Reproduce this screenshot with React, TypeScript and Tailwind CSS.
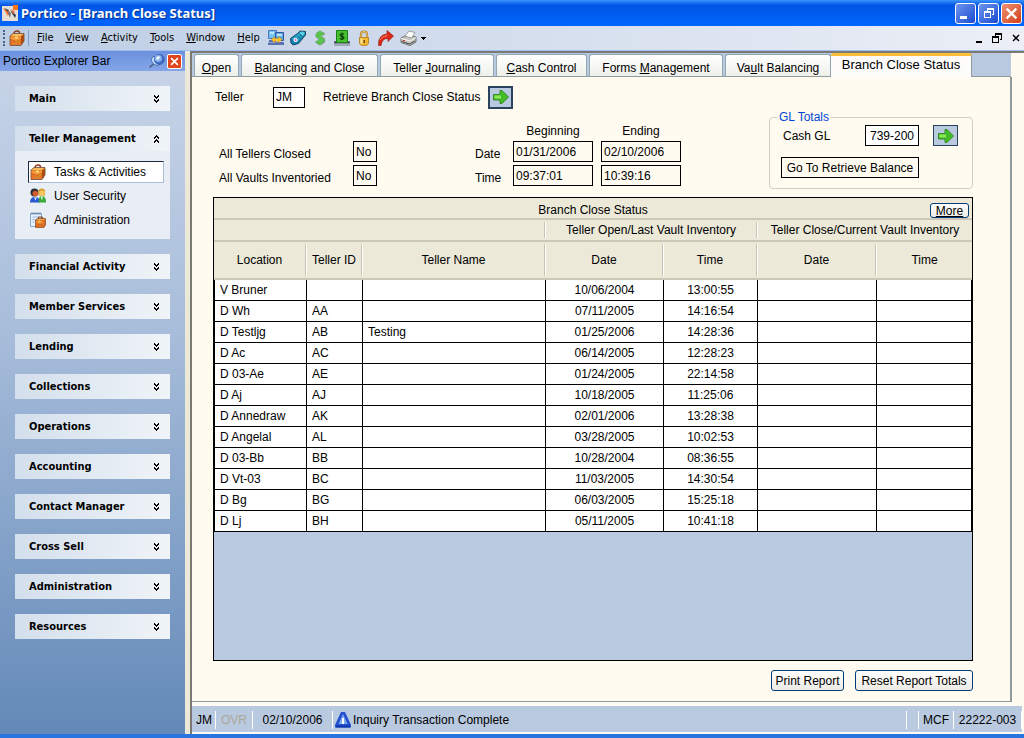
import React from 'react';

const tahoma = "font-['DejaVu_Sans_Condensed','Noto_Sans',sans-serif]";

const groups = [
  'Financial Activity',
  'Member Services',
  'Lending',
  'Collections',
  'Operations',
  'Accounting',
  'Contact Manager',
  'Cross Sell',
  'Administration',
  'Resources',
];

const rows = [
  ['V Bruner', '', '', '10/06/2004', '13:00:55'],
  ['D Wh', 'AA', '', '07/11/2005', '14:16:54'],
  ['D Testljg', 'AB', 'Testing', '01/25/2006', '14:28:36'],
  ['D Ac', 'AC', '', '06/14/2005', '12:28:23'],
  ['D 03-Ae', 'AE', '', '01/24/2005', '22:14:58'],
  ['D Aj', 'AJ', '', '10/18/2005', '11:25:06'],
  ['D Annedraw', 'AK', '', '02/01/2006', '13:28:38'],
  ['D Angelal', 'AL', '', '03/28/2005', '10:02:53'],
  ['D 03-Bb', 'BB', '', '10/28/2004', '08:36:55'],
  ['D Vt-03', 'BC', '', '11/03/2005', '14:30:54'],
  ['D Bg', 'BG', '', '06/03/2005', '15:25:18'],
  ['D Lj', 'BH', '', '05/11/2005', '10:41:18'],
];

/* Icons */

const Briefcase = ({ className = 'w-4 h-4' }) => (
  <svg viewBox="0 0 16 16" className={className}>
    <path d="M5 4.500V3Q5.500 1 8 1t2.500 2v1" fill="none" stroke="#8a3414" strokeWidth="1.400" />
    <path d="M1 6 4 3.500h11V11l-3 4.500H1z" fill="#c45f17" stroke="#7d5a48" strokeWidth=".9" />
    <path d="M1.500 6 4.300 4h10.200L12 6.300z" fill="#f8bc5c" />
    <path d="M1.500 6.500H12V9l-5 2-5.500-2z" fill="#f49a38" />
    <path d="M1.500 10 7 11.500 12 9.500V15H1.500z" fill="#e8742c" />
    <path d="m5 14.500 6-4" stroke="#c8981c" strokeWidth="1.200" />
    <path d="M12.300 6.500 14.700 4.300V11l-2.400 3.800z" fill="#a8480f" />
    <path d="M6 6.500h3v2H6z" fill="#fcd878" />
  </svg>
);

const AppLogo = () => (
  <svg viewBox="0 0 16 16" className="w-4 h-4">
    <path d="M0 1h16v15H0z" fill="#e6ded6" />
    <path d="M11 0h5v5h-5z" fill="#ff7414" />
    <path d="m1 3 7 4-2 4z" fill="#f0702c" />
    <path d="m2 3 5 2-1 2z" fill="#3c4454" />
    <path d="m5.500 6 2.500 7 1-5z" fill="#68707c" />
    <path d="m8 5 6 5-1 3z" fill="#303848" />
    <path d="m9 4 4 3-2 2z" fill="#e8642c" />
  </svg>
);

const Computers = () => (
  <svg viewBox="0 0 16 16" className="w-4 h-4">
    <path d="M.5.500h8v8h-8z" fill="#70c4f4" stroke="#4c72c0" />
    <path d="M7.500 2.500h8v8h-8z" fill="#58a4e6" stroke="#3454a0" />
    <path d="M2 2h4v2H2zM9 4h5v2H9z" fill="#b6e8fc" />
    <path d="M1 10h7v2H1zM0 12.500h9V15H0zM8 12h8v3H8z" fill="#5870b4" />
    <path d="m3.500 9.500 3-3v2h4v-2l3.500 3-3.500 3.500v-2h-4v2z" fill="#ffc828" stroke="#c88410" strokeWidth=".5" />
  </svg>
);

const Pager = () => (
  <svg viewBox="0 0 16 16" className="w-4 h-4">
    <path d="m.500 8.500 7-5L10 1l5.500.5V5l-7 8.500L3 15l-2-2z" fill="#1280a8" stroke="#103c60" strokeWidth=".9" />
    <path d="m1.500 8.500 8-5.500L13 6l-6.500 6.500z" fill="#28a4c8" />
    <path d="m9.500 3 1-1.500 4 .5v2.500L12.500 6z" fill="#58cce0" />
    <circle cx="5.500" cy="10" r="2.100" fill="#fff" />
    <circle cx="5.500" cy="10" r="1.100" fill="#e060c0" />
    <path d="m8 6.500 2 2M10 4.500l2 2" stroke="#083c60" />
  </svg>
);

const Dollar = () => (
  <svg viewBox="0 0 16 16" className="w-4 h-4">
    <path d="M12 4.800C11 3.200 5.200 2.400 5 5.300c-.2 3 6.800 2 6.600 5.200-.2 3-5.800 2.600-7.400.7M8 .8v14.400" fill="none" stroke="#7c8c7c" strokeWidth="3.200" />
    <path d="M11.600 4.600C10.600 3.200 5 2.400 4.800 5.100c-.2 2.800 6.600 2 6.400 5.200-.2 2.800-5.600 2.600-7 .7M8 1v14" fill="none" stroke="#54cc44" strokeWidth="2" />
  </svg>
);

const CashDrawer = () => (
  <svg viewBox="0 0 16 16" className="w-4 h-4">
    <path d="M0 11h16v4.500H0z" fill="#6e7484" />
    <path d="M1 12h14v1H1z" fill="#242838" />
    <path d="M2.500.500h11v12h-11z" fill="#48c030" stroke="#1c8018" />
    <path d="M10 4.300C9 3.400 6 3.400 6 5c0 1.800 4 1 4 2.800 0 1.700-3 1.600-4.200.6M8 2.500v7.500" fill="none" stroke="#0a3808" strokeWidth="1.100" />
    <path d="M0 13.500h16V15H0z" fill="#a4a8b4" />
  </svg>
);

const Padlock = () => (
  <svg viewBox="0 0 16 16" className="w-4 h-4">
    <path d="M5 8V4.500Q5 1.500 8 1.500t3 3V8" fill="none" stroke="#a87820" strokeWidth="2.200" />
    <path d="M5 8V4.500Q5 1.500 8 1.500t3 3V8" fill="none" stroke="#f4d078" strokeWidth="1" />
    <path d="M3.500 7.500h9V13Q12.500 15.500 8 15.500T3.500 13z" fill="#f4b830" stroke="#b07818" strokeWidth=".8" />
    <path d="M4.500 8.500h2V14l-2-1z" fill="#fce49c" />
    <path d="M7.500 10H9v3H7.500z" fill="#704808" />
  </svg>
);

const RedArrow = () => (
  <svg viewBox="0 0 16 16" className="w-4 h-4">
    <path d="M.500 15.500Q0 4.500 9 4V.500l6.500 5.500-5.500 5.500V8.500Q4 8 3 15.500z" fill="#dc2814" stroke="#901408" strokeWidth=".6" />
    <path d="M2 10Q4 6 9.500 5.500" fill="none" stroke="#f88468" />
  </svg>
);

const PrinterIcon = () => (
  <svg viewBox="0 0 18 16" className="w-[18px] h-4">
    <path d="m1 8 6-3 9 2v5l-6 3.500-9-3z" fill="#c4c4c0" stroke="#585858" strokeWidth=".8" />
    <path d="m5 6 4-5 6 1.500L11.500 8z" fill="#fff" stroke="#808080" strokeWidth=".7" />
    <path d="m1 8.500 9 2.500 6-3.500" fill="none" stroke="#f8f8f4" />
    <path d="m2 11.500 7.500 2.500L15 11" fill="none" stroke="#484848" />
    <path d="M3 10h2v1H3z" fill="#d83020" />
  </svg>
);

const Users = () => (
  <svg viewBox="0 0 16 16" className="w-4 h-4">
    <circle cx="4.500" cy="4.500" r="4" fill="#28303c" />
    <circle cx="5.300" cy="5.500" r="2.800" fill="#d45c28" />
    <path d="M0 14.500q0-5.500 5-5.500t5 5.500z" fill="#2858d0" />
    <path d="m4 9.500 1.500 3 1.500-3z" fill="#dce8ff" />
    <path d="M8.500 2Q11.500-1 15 2v5.500H8.500z" fill="#d89420" />
    <circle cx="12" cy="5" r="2.800" fill="#f8c860" />
    <path d="M9 14.500q-1-6.500 3-6.500t4 6.500z" fill="#38a838" />
    <path d="m10.500 8.500 1.500 4 1-4z" fill="#e4f8dc" />
  </svg>
);

const NotebookCase = () => (
  <svg viewBox="0 0 16 16" className="w-4 h-4">
    <path d="M.500 1.500h11v13H.500z" fill="#e4f0fc" stroke="#88a8cc" />
    <path d="M2 .500v2M4 .500v2M6 .500v2M8 .500v2M10 .500v2" stroke="#506c94" />
    <path d="M2.500 5h6M2.500 7.500h3M2.500 10h2" stroke="#98b8e0" />
    <path d="M8.500 6.500V5h4v1.500" fill="none" stroke="#7a3c14" />
    <path d="m5.500 8 2-1.500h8V13L14 15.500H5.500z" fill="#d86c20" stroke="#854a24" strokeWidth=".7" />
    <path d="M6 8h8l1-1H7.500z" fill="#f4a850" />
    <path d="M6 9h7.500v2L10 12l-4-1z" fill="#ec8c38" />
    <path d="M8.500 8.500h2v2h-2z" fill="#f8d060" />
  </svg>
);

const GreenArrow = () => (
  <svg viewBox="0 0 16 14" className="w-4 h-[14px]">
    <path d="M.500 4.500H7V.500h2L15.500 7 9 13.500H7V10H.500z" fill="#44bc28" stroke="#308420" strokeWidth=".9" />
    <path d="M1.500 5.500H8v3H1.500z" fill="#8ce858" />
  </svg>
);

const Chevrons = ({ up = false }) => (
  <svg viewBox="0 0 7 8" className={up ? 'w-[7px] h-2 rotate-180' : 'w-[7px] h-2'} shapeRendering="crispEdges">
    <path d="M1 0h1v1h1v1h1V1h1V0h1v2H5v1H4v1H3V3H2V2H1z" />
    <path d="M1 4h1v1h1v1h1V5h1V4h1v2H5v1H4v1H3V7H2V6H1z" />
  </svg>
);

const Pin = () => (
  <svg viewBox="0 0 16 14" className="w-4 h-[14px]">
    <path d="m.500 13.500 4-3.500" stroke="#455878" strokeWidth="1.300" />
    <path d="M3 3.500q2-2 4-.5l4 3q2 3-1 5-3 1.500-6-1.500T3 3.500z" fill="#c4dcfc" stroke="#446cac" />
    <ellipse cx="10.300" cy="5.500" rx="5" ry="5" fill="#3c6cc8" stroke="#2c509c" strokeWidth=".6" />
    <ellipse cx="9.300" cy="4.500" rx="3.600" ry="3.400" fill="#8cb4f0" />
    <path d="m7 5 2-3 2 1-2 3z" fill="#fff" />
  </svg>
);

const CloseX = ({ className = '' }) => (
  <svg viewBox="0 0 12 12" className={className}>
    <path d="m1.500 1.500 9 9m0-9-9 9" stroke="currentColor" strokeWidth="2.200" />
  </svg>
);

const RestoreIcon = ({ className = '' }) => (
  <svg viewBox="0 0 10 10" className={className} shapeRendering="crispEdges">
    <path d="M3 0h7v7H8V6h1V2H4v1H3z" fill="currentColor" />
    <path d="M0 3h7v7H0zm1 2v4h5V5z" fill="currentColor" fillRule="evenodd" />
  </svg>
);

const InfoTriangle = () => (
  <svg viewBox="0 0 16 16" className="w-4 h-4">
    <path d="M6 0h4l6 13v2.500H0V13z" fill="#2450d0" />
    <path d="m8 2 4.500 10h-9z" fill="#80a8ec" />
    <path d="M7 6h2v6H7z" fill="#fff" />
    <path d="M1 13.500h14v2H1z" fill="#1034b0" />
  </svg>
);

/* Small parts */

const MenuItem = ({ label }: { label: string }) => (
  <button className="first-letter:underline">{label}</button>
);

const Field = ({ id, label, value, className = '' }: { id: string; label: string; value: string; className?: string }) => (
  <input id={id} aria-label={label} defaultValue={value} className={`h-[21px] border border-black px-0.5 outline-none ${className}`} />
);

const GroupHeader = ({ label, open = false }: { label: string; open?: boolean }) => (
  <button className="flex h-[25px] w-full items-center justify-between bg-linear-to-r from-[#d3dfec] to-[#f0f4f8] pl-3.5 pr-2.5 font-bold">
    {label}
    <Chevrons up={open} />
  </button>
);

const HeaderCell = ({ label, last = false }: { label: string; last?: boolean }) => (
  <div className="flex h-full items-stretch py-0.5">
    <span className="flex flex-1 items-center justify-center whitespace-nowrap">{label}</span>
    {!last && <span className="w-0.5 border-r border-white bg-[#c7c4b4]" />}
  </div>
);

const XpButton = ({ children, className = '' }: { children: React.ReactNode; className?: string }) => (
  <button className={`rounded-[3px] border border-[#003c74] bg-linear-to-b from-white to-[#ecebe6] whitespace-nowrap ${className}`}>
    {children}
  </button>
);

const tabBase = 'h-[22px] rounded-t-[3px] border border-b-0 border-[#91a7b4] bg-linear-to-b from-white to-[#efefea] pt-1 whitespace-nowrap';
const headBorder = 'border-b-2 border-[#cbc8b8] p-0 font-normal';

export default function App() {
  return (
    <div className="flex min-h-screen flex-col bg-[#fffbf0] font-['Liberation_Sans',Arial,sans-serif] text-[12px] leading-4 text-black">
      {/* Title bar */}
      <header className="flex h-[26px] items-center bg-linear-to-b from-[#3c94ff] via-[#0055e5] via-20% to-[#0066ff] px-0.5">
        <AppLogo />
        <h1 className="ml-[3px] flex-1 font-['Noto_Sans',sans-serif] text-[13px] font-bold text-white [text-shadow:1px_1px_1px_#0b2f8c]">
          Portico - [Branch Close Status]
        </h1>
        <div className="flex gap-0.5 text-white">
          <button aria-label="Minimize" className="flex h-[21px] w-[21px] items-end rounded-[3px] border border-white bg-linear-to-br from-[#6f95f0] to-[#1b48cf] p-1">
            <span className="h-[3px] w-[7px] bg-white" />
          </button>
          <button aria-label="Restore" className="flex h-[21px] w-[21px] items-center justify-center rounded-[3px] border border-white bg-linear-to-br from-[#6f95f0] to-[#1b48cf]">
            <RestoreIcon className="h-2.5 w-2.5" />
          </button>
          <button aria-label="Close" className="flex h-[21px] w-[21px] items-center justify-center rounded-[3px] border border-white bg-linear-to-br from-[#f09070] to-[#d03c10]">
            <CloseX className="h-[13px] w-[13px]" />
          </button>
        </div>
      </header>

      {/* Menu bar */}
      <nav className={`flex h-[25px] items-center border-b border-[#9ebef5] bg-linear-to-r from-[#bccde4] to-[#eceff6] text-[11px] ${tahoma}`}>
        <span className="ml-[3px] h-4 border-l-2 border-dotted border-[#45618c]" />
        <span className="ml-1 flex h-4 w-5 border-r border-[#7c9cd0]">
          <Briefcase />
        </span>
        <div className="ml-2 flex gap-3">
          <MenuItem label="File" />
          <MenuItem label="View" />
          <MenuItem label="Activity" />
          <MenuItem label="Tools" />
          <MenuItem label="Window" />
          <MenuItem label="Help" />
        </div>
        <div className="ml-2 flex flex-1 items-center gap-1.5">
          <button aria-label="Connect"><Computers /></button>
          <button aria-label="Pager"><Pager /></button>
          <button aria-label="Cash"><Dollar /></button>
          <button aria-label="Cash drawer"><CashDrawer /></button>
          <button aria-label="Lock"><Padlock /></button>
          <button aria-label="Forward"><RedArrow /></button>
          <button aria-label="Print" className="flex items-center gap-[3px]">
            <PrinterIcon />
            <svg viewBox="0 0 5 3" className="h-[3px] w-[5px]" shapeRendering="crispEdges"><path d="M0 0h5L2.500 3z" /></svg>
          </button>
        </div>
        <div className="flex items-center gap-2.5 pr-1">
          <button aria-label="Minimize document" className="mt-2 h-0.5 w-1.5 bg-black" />
          <button aria-label="Restore document"><RestoreIcon className="h-2.5 w-2.5" /></button>
          <button aria-label="Close document"><CloseX className="h-2 w-2" /></button>
        </div>
      </nav>

      <div className="flex flex-1">
        {/* Explorer bar */}
        <aside className="flex w-[185px] shrink-0 flex-col bg-linear-to-b from-[#c9d5e8] via-[#a9bedb] via-40% to-[#6389b8]">
          <div className="flex h-5 items-center bg-linear-to-b from-[#6b90de] to-[#85a5e8] pl-[3px] pr-[3px]">
            <span className="flex-1">Portico Explorer Bar</span>
            <button aria-label="Pin"><Pin /></button>
            <button aria-label="Close explorer bar" className="ml-0.5 flex h-[15px] w-[15px] items-center justify-center rounded-[2px] border border-white bg-[#e0451c] text-white">
              <CloseX className="h-[9px] w-[9px]" />
            </button>
          </div>
          <div className={`flex flex-col gap-[15px] px-[15px] pt-[15px] text-[11px] ${tahoma}`}>
            <GroupHeader label="Main" />
            <section className="bg-[#e9eef4]">
              <GroupHeader label="Teller Management" open />
              <ul className="flex flex-col gap-0.5 px-[13px] pb-2 pt-2.5 font-['Liberation_Sans',Arial,sans-serif] text-[12px]">
                <li>
                  <a href="#tasks" className="flex h-[22px] w-[136px] items-center gap-2 border border-[#a9bcd6] border-l-[#1c2a3c] border-t-[#1c2a3c] bg-white pl-px">
                    <Briefcase /> Tasks &amp; Activities
                  </a>
                </li>
                <li>
                  <a href="#security" className="flex h-[22px] items-center gap-2 pl-0.5">
                    <Users /> User Security
                  </a>
                </li>
                <li>
                  <a href="#admin" className="flex h-[22px] items-center gap-2 pl-0.5">
                    <NotebookCase /> Administration
                  </a>
                </li>
              </ul>
            </section>
            {groups.map((g) => (
              <GroupHeader key={g} label={g} />
            ))}
          </div>
        </aside>

        <div className="w-[5px] shrink-0 bg-[#ece9d8]" />

        <main className="flex min-w-0 flex-1 flex-col border-l-2 border-t-2 border-[#7b7a72]">
          {/* Tabs */}
          <div role="tablist" className="mr-[13px] flex h-6 items-end gap-0.5 border-b border-[#919b9c] bg-[#b9c9e0] pl-0.5">
            <button role="tab" className={`w-[45px] ${tabBase}`}><u>O</u>pen</button>
            <button role="tab" className={`w-[137px] ${tabBase}`}><u>B</u>alancing and Close</button>
            <button role="tab" className={`w-[114px] ${tabBase}`}>Teller <u>J</u>ournaling</button>
            <button role="tab" className={`w-[91px] ${tabBase}`}><u>C</u>ash Control</button>
            <button role="tab" className={`w-[134px] ${tabBase}`}>Forms <u>M</u>anagement</button>
            <div className="flex items-end">
              <button role="tab" className={`w-[106px] ${tabBase}`}>Va<u>u</u>lt Balancing</button>
              <button role="tab" aria-selected="true" className="-mb-px h-6 w-[141px] whitespace-nowrap rounded-t-[3px] border-r border-t-[3px] border-r-[#919b9c] border-t-[#fcbe38] bg-[#fdfcfa] pb-1 text-[13px]">
                Branch Close Status
              </button>
            </div>
          </div>

          <div className="mr-3 flex flex-1 flex-col border-b border-r-2 border-[#919b9c] pb-2.5 pl-[21px] pr-[37px] pt-[9px]">
            <div className="flex h-[22px] items-center pl-0.5">
              <label htmlFor="teller" className="w-[58px]">Teller</label>
              <Field id="teller" label="Teller" value="JM" className="w-8 bg-white" />
              <span className="ml-[18px]">Retrieve Branch Close Status</span>
              <button aria-label="Retrieve Branch Close Status" className="ml-2 flex h-[23px] w-[25px] items-center justify-center border-2 border-[#2a4260] bg-[#b9c9e0]">
                <GreenArrow />
              </button>
            </div>

            <div className="mt-2 flex justify-between">
              <div className="flex items-start pt-[7px]">
                <div className="mt-[18px] grid grid-cols-[134px_24px] gap-y-[3px] pl-1.5">
                  <label htmlFor="closed" className="pt-[5px]">All Tellers Closed</label>
                  <Field id="closed" label="All Tellers Closed" value="No" />
                  <label htmlFor="inventoried" className="pt-[5px]">All Vaults Inventoried</label>
                  <Field id="inventoried" label="All Vaults Inventoried" value="No" />
                </div>
                <div className="ml-[98px] grid grid-cols-[30px_80px_80px] gap-x-2 gap-y-[3px]">
                  <span />
                  <span className="-mb-px text-center">Beginning</span>
                  <span className="-mb-px text-center">Ending</span>
                  <span className="pt-[5px]">Date</span>
                  <Field id="date-from" label="Beginning date" value="01/31/2006" />
                  <Field id="date-to" label="Ending date" value="02/10/2006" />
                  <span className="pt-[5px]">Time</span>
                  <Field id="time-from" label="Beginning time" value="09:37:01" />
                  <Field id="time-to" label="Ending time" value="10:39:16" />
                </div>
              </div>

              <fieldset className="-mt-[7px] mb-2 w-[204px] rounded-[4px] border border-[#d0d0bf] px-[11px] pb-2.5">
                <legend className="-ml-1 px-0.5 text-[#0046d5]">GL Totals</legend>
                <div className="flex h-[21px] items-center">
                  <label htmlFor="cash-gl" className="w-[84px] pl-0.5">Cash GL</label>
                  <Field id="cash-gl" label="Cash GL" value="739-200" className="w-[54px] bg-white text-center" />
                  <button aria-label="Retrieve GL totals" className="ml-3.5 flex h-[21px] w-[25px] items-center justify-center border border-[#2a4260] bg-[#b9c9e0]">
                    <GreenArrow />
                  </button>
                </div>
                <Field id="balance" label="Balance" value="Go To Retrieve Balance" className="mt-[11px] w-[138px] text-center" />
              </fieldset>
            </div>

            {/* Status grid */}
            <div className="flex-1 border border-black bg-[#b9c9e0]">
              <table className="w-full table-fixed border-separate border-spacing-0">
                <colgroup>
                  <col className="w-[93px]" />
                  <col className="w-[56px]" />
                  <col />
                  <col className="w-[118px]" />
                  <col className="w-[94px]" />
                  <col className="w-[119px]" />
                  <col className="w-[95px]" />
                </colgroup>
                <thead className="bg-[#ece9d8]">
                  <tr className="h-[22px]">
                    <th colSpan={7} className={headBorder}>
                      <div className="grid h-5 grid-cols-[1fr_auto_1fr] items-center pt-1">
                        <span />
                        <span>Branch Close Status</span>
                        <XpButton className="mr-[3px] h-[15px] w-[39px] justify-self-end leading-[14px]">
                          <u>More</u>
                        </XpButton>
                      </div>
                    </th>
                  </tr>
                  <tr className="h-[22px]">
                    <th colSpan={3} className={`h-[22px] ${headBorder}`}><HeaderCell label="" /></th>
                    <th colSpan={2} className={`h-[22px] ${headBorder}`}><HeaderCell label="Teller Open/Last Vault Inventory" /></th>
                    <th colSpan={2} className={`h-[22px] ${headBorder}`}><HeaderCell label="Teller Close/Current Vault Inventory" last /></th>
                  </tr>
                  <tr className="h-[38px]">
                    {['Location', 'Teller ID', 'Teller Name', 'Date', 'Time', 'Date', 'Time'].map((h, i) => (
                      <th key={i} className={`h-[38px] ${headBorder}`}>
                        <HeaderCell label={h} last={i === 6} />
                      </th>
                    ))}
                  </tr>
                </thead>
                <tbody className="bg-white">
                  {rows.map((r) => (
                    <tr key={r[0]} className="h-[21px] *:border-b *:border-r *:border-black *:py-0">
                      <td className="border-l pl-[5px]">{r[0]}</td>
                      <td className="pl-[5px]">{r[1]}</td>
                      <td className="pl-[5px]">{r[2]}</td>
                      <td className="text-center">{r[3]}</td>
                      <td className="text-center">{r[4]}</td>
                      <td />
                      <td />
                    </tr>
                  ))}
                </tbody>
              </table>
            </div>

            <div className="mt-[9px] flex justify-end gap-[11px]">
              <XpButton className="h-[21px] w-[73px]">Print Report</XpButton>
              <XpButton className="h-[21px] w-[118px]">Reset Report Totals</XpButton>
            </div>
          </div>

          {/* Status bar */}
          <footer className="mb-0.5 mr-0.5 mt-1 flex h-[26px] items-center bg-[#b9c9e0] pl-1 pt-0.5 *:flex *:h-[18px] *:items-center *:border-white">
            <span className="w-5 border-r">JM</span>
            <span className="w-[37px] justify-center border-r text-[#aca899]">OVR</span>
            <span className="w-20 justify-center border-r">02/10/2006</span>
            <span className="flex-1 gap-0.5 border-r pl-0.5"><InfoTriangle /> Inquiry Transaction Complete</span>
            <span className="w-3 border-r" />
            <span className="w-[35px] justify-end border-r pr-1">MCF</span>
            <span className="w-[68px] justify-center border-r">22222-003</span>
          </footer>
        </main>
      </div>
      <div className="h-1 bg-[#2a74e0]" />
    </div>
  );
}
